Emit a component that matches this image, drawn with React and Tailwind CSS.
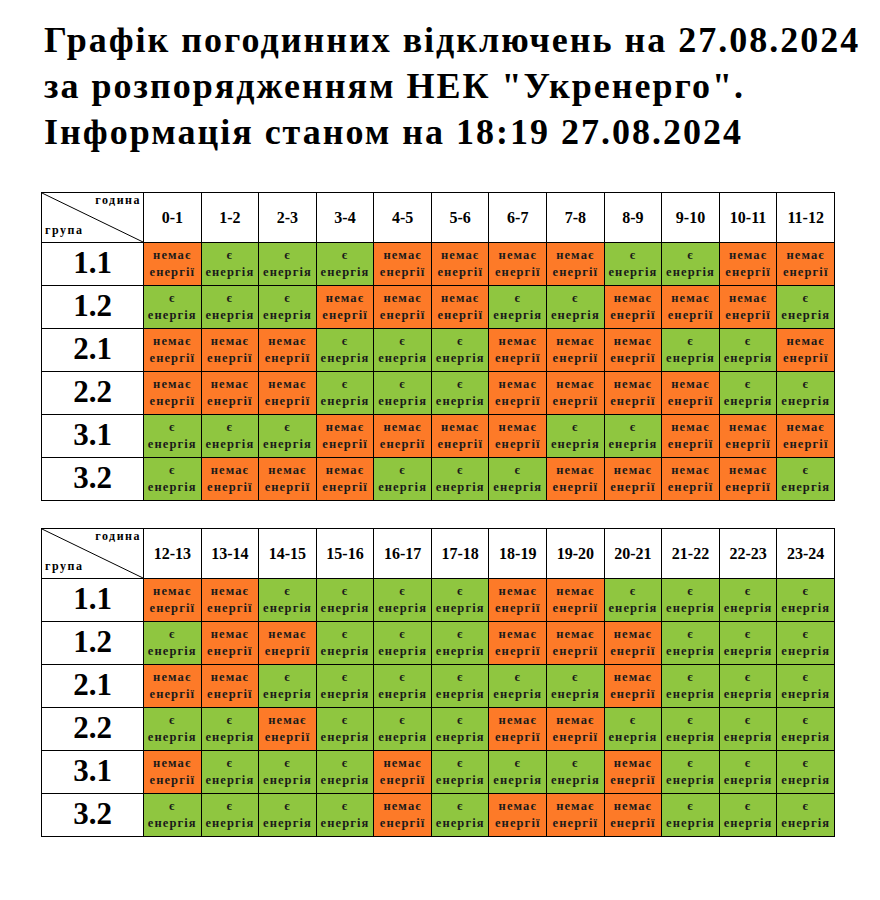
const NO = "n";
const YES = "y";

const parse = (s) => s.split("").map((c) => (c === "N" ? NO : YES));

const tables = [
  {
    hours: ["0-1", "1-2", "2-3", "3-4", "4-5", "5-6", "6-7", "7-8", "8-9", "9-10", "10-11", "11-12"],
    rows: [
      ["1.1", "NEEENNNNEENN"],
      ["1.2", "EEENNNEENNNE"],
      ["2.1", "NNNEEENNNEEN"],
      ["2.2", "NNNEEENNNNEE"],
      ["3.1", "EEENNNNEENNN"],
      ["3.2", "ENNNEEENNNNE"],
    ],
  },
  {
    hours: ["12-13", "13-14", "14-15", "15-16", "16-17", "17-18", "18-19", "19-20", "20-21", "21-22", "22-23", "23-24"],
    rows: [
      ["1.1", "NNEEEENNEEEE"],
      ["1.2", "ENNEEENNNEEE"],
      ["2.1", "NNEEEEEENEEE"],
      ["2.2", "EENEEENNEEEE"],
      ["3.1", "NEEENEEENEEE"],
      ["3.2", "EEEENENNNEEE"],
    ],
  },
];

function Cell({ state }) {
  const off = state === NO;
  return (
    <td
      className={`border border-black p-0 text-center align-middle h-[43px] ${
        off ? "bg-[#fd7a28]" : "bg-[#8fc640]"
      }`}
    >
      <div className="text-[12.5px] leading-[17px] font-bold tracking-[1.1px] text-[#1a1a1a]">
        <div>{off ? "немає" : "є"}</div>
        <div>{off ? "енергії" : "енергія"}</div>
      </div>
    </td>
  );
}

function Schedule({ hours, rows }) {
  return (
    <table className="w-[794px] border-collapse table-fixed">
      <colgroup>
        <col className="w-[102px]" />
        {hours.map((h) => (
          <col key={h} />
        ))}
      </colgroup>
      <thead>
        <tr>
          <th className="relative border border-black p-0 h-[50px] bg-white">
            {/* corner: diagonal split */}
            <svg
              className="absolute inset-0 w-full h-full"
              viewBox="0 0 100 100"
              preserveAspectRatio="none"
            >
              <line x1="0" y1="0" x2="100" y2="100" stroke="black" strokeWidth="1" vectorEffect="non-scaling-stroke" />
            </svg>
            <span className="absolute right-[2px] top-[0px] text-[12px] leading-[14px] font-bold tracking-[1.5px]">
              година
            </span>
            <span className="absolute left-[3px] bottom-[5px] text-[12px] leading-[14px] font-bold tracking-[1.5px]">
              група
            </span>
          </th>
          {hours.map((h) => (
            <th key={h} className="border border-black p-0 text-[16px] leading-none font-bold bg-white">
              {h}
            </th>
          ))}
        </tr>
      </thead>
      <tbody>
        {rows.map(([group, states]) => (
          <tr key={group}>
            <td className="border border-black p-0 text-center text-[31px] leading-none font-bold bg-white pb-[4px]">
              {group}
            </td>
            {parse(states).map((s, i) => (
              <Cell key={i} state={s} />
            ))}
          </tr>
        ))}
      </tbody>
    </table>
  );
}

export default function App() {
  return (
    <div className="w-[880px] min-h-[900px] bg-white text-black font-[family-name:'Liberation_Serif',serif]">
      <div className="pl-[44px] pt-[17px] text-[36px] leading-[46px] font-bold tracking-[2px]">
        <div>Графік погодинних відключень на 27.08.2024</div>
        <div>за розпорядженням НЕК "Укренерго".</div>
        <div>Інформація станом на 18:19 27.08.2024</div>
      </div>

      <div className="pl-[41px] pt-[37px] flex flex-col gap-[27px]">
        {tables.map((t, i) => (
          <Schedule key={i} hours={t.hours} rows={t.rows} />
        ))}
      </div>
    </div>
  );
}
